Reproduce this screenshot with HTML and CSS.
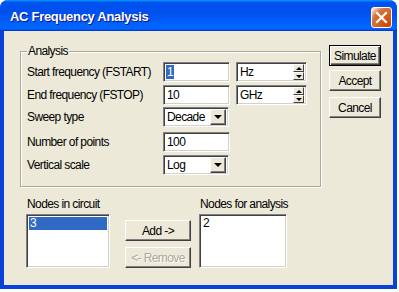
FILE: index.html
```html
<!DOCTYPE html>
<html lang="en">
<head>
    <meta charset="UTF-8">
    <title>AC Frequency Analysis</title>
    <link rel="stylesheet" href="styles.css">
</head>
<body>
    <div class="window">
        <div class="titlebar">
            <span class="title">AC Frequency Analysis</span>
            <div class="close-btn">
                <svg width="13" height="13" viewBox="0 0 13 13">
                    <path d="M2 2 L11 11 M11 2 L2 11" stroke="#fff" stroke-width="2.2" stroke-linecap="square"/>
                </svg>
            </div>
        </div>

        <div class="client">
            <div class="top-row">
                <fieldset class="group">
                    <legend>Analysis</legend>
                    <div class="form-grid">
                        <div class="label">Start frequency (FSTART)</div>
                        <div class="field"><span class="selected-text">1</span></div>
                        <div class="field spin">
                            <span>Hz</span>
                            <div class="spin-arrows">
                                <div class="spin-btn"><span class="tri-up"></span></div>
                                <div class="spin-btn"><span class="tri-down"></span></div>
                            </div>
                        </div>

                        <div class="label">End frequency (FSTOP)</div>
                        <div class="field">10</div>
                        <div class="field spin">
                            <span>GHz</span>
                            <div class="spin-arrows">
                                <div class="spin-btn"><span class="tri-up"></span></div>
                                <div class="spin-btn"><span class="tri-down"></span></div>
                            </div>
                        </div>

                        <div class="label">Sweep type</div>
                        <div class="field combo">
                            <span>Decade</span>
                            <div class="drop-btn"><span class="tri-down big"></span></div>
                        </div>
                        <div></div>

                        <div class="label">Number of points</div>
                        <div class="field">100</div>
                        <div></div>

                        <div class="label">Vertical scale</div>
                        <div class="field combo">
                            <span>Log</span>
                            <div class="drop-btn"><span class="tri-down big"></span></div>
                        </div>
                        <div></div>
                    </div>
                </fieldset>

                <div class="actions">
                    <div class="btn default">Simulate</div>
                    <div class="btn accept">Accept</div>
                    <div class="btn cancel">Cancel</div>
                </div>
            </div>

            <div class="bottom-row">
                <div class="list-col left-list">
                    <div class="list-label">Nodes in circuit</div>
                    <div class="listbox">
                        <div class="item active">3</div>
                    </div>
                </div>
                <div class="mid-buttons">
                    <div class="btn wide">Add -&gt;</div>
                    <div class="btn wide disabled">&lt;- Remove</div>
                </div>
                <div class="list-col right-list">
                    <div class="list-label">Nodes for analysis</div>
                    <div class="listbox">
                        <div class="item">2</div>
                    </div>
                </div>
            </div>
        </div>
    </div>
</body>
</html>
```

FILE: styles.css
```css
/* Page */
body {
    margin: 0;
    background: #fff;
    font-family: "Liberation Sans", Arial, sans-serif;
    font-size: 12px;
    letter-spacing: -0.6px;
    color: #000;
}

/* Window frame */
.window {
    width: 397px;
    height: 289px;
    box-sizing: border-box;
    border: 4px solid #0842d6;
    border-top: none;
    border-radius: 8px 8px 0 0;
    background: #ece9d8;
    display: flex;
    flex-direction: column;
}

.titlebar {
    height: 31px;
    margin: 0 -4px;
    border-radius: 8px 8px 0 0;
    background: linear-gradient(180deg, #0997ff, #0053ee 8%, #0050ee 40%, #06f 88%, #06f 93%, #005bff 95%, #003dd7 96%, #003dd7);
    display: flex;
    align-items: center;
    justify-content: space-between;
    padding: 0 5px 0 10px;
    flex-shrink: 0;
}

.title {
    color: #fff;
    font-weight: bold;
    font-size: 13px;
    letter-spacing: -0.3px;
    text-shadow: 1px 1px 0 #0f1089;
    margin-top: 1px;
}

.close-btn {
    width: 21px;
    height: 21px;
    box-sizing: border-box;
    border: 1px solid #fff;
    border-radius: 3px;
    background: radial-gradient(circle at 90% 90%, #cc4600 0%, #dc6527 55%, #cd7546 70%, #ffccb2 90%, #fff 100%);
    display: flex;
    align-items: center;
    justify-content: center;
    margin-top: 3px;
}

/* Client area */
.client {
    flex: 1;
    display: flex;
    flex-direction: column;
}

.top-row {
    display: flex;
    align-items: flex-start;
    padding: 13px 0 0 16px;
}

/* Group box */
.group {
    margin: 0;
    width: 301px;
    box-sizing: border-box;
    padding: 4px 0 10px 6px;
    border: 1px solid #aca899;
    box-shadow: inset 1px 1px 0 #fff, 1px 1px 0 #fff;
    min-width: 0;
}

.group legend {
    padding: 0 1px;
    margin-left: 0;
    line-height: 14px;
}

.form-grid {
    display: grid;
    grid-template-columns: 130px 67px 71px;
    grid-template-rows: 23px 22px 25px 23px 21px;
    column-gap: 6px;
    align-items: start;
}

.label {
    line-height: 20px;
    white-space: nowrap;
}

/* Sunken fields */
.field {
    height: 20px;
    box-sizing: border-box;
    background: #fff;
    border: 1px solid;
    border-color: #808080 #fff #fff #808080;
    box-shadow: inset 1px 1px 0 #404040, inset -1px -1px 0 #d4d0c8;
    padding: 0 3px;
    line-height: 18px;
    display: flex;
    align-items: center;
}

.selected-text {
    background: #316ac5;
    color: #fff;
    line-height: 14px;
    padding: 0 1px;
    margin-left: -1px;
}

.spin,
.combo {
    justify-content: space-between;
    padding-right: 2px;
}

.combo {
    width: 66px;
}

.spin-arrows {
    display: flex;
    flex-direction: column;
    width: 11px;
}

.spin-btn {
    height: 8px;
    box-sizing: border-box;
    background: #ece9d8;
    border: 1px solid;
    border-color: #fff #404040 #404040 #fff;
    display: flex;
    align-items: center;
    justify-content: center;
}

.drop-btn {
    width: 16px;
    height: 16px;
    box-sizing: border-box;
    background: #ece9d8;
    border: 1px solid;
    border-color: #fff #404040 #404040 #fff;
    box-shadow: inset -1px -1px 0 #808080;
    display: flex;
    align-items: center;
    justify-content: center;
}

.tri-up,
.tri-down {
    width: 0;
    height: 0;
    border-left: 3px solid transparent;
    border-right: 3px solid transparent;
}

.tri-up {
    border-bottom: 3px solid #000;
}

.tri-down {
    border-top: 3px solid #000;
}

.tri-down.big {
    border-left-width: 4px;
    border-right-width: 4px;
    border-top-width: 4px;
}

/* Buttons */
.actions {
    display: flex;
    flex-direction: column;
    margin: 1px 0 0 8px;
}

.btn {
    width: 52px;
    height: 21px;
    box-sizing: border-box;
    background: #ece9d8;
    border: 1px solid;
    border-color: #fff #404040 #404040 #fff;
    box-shadow: inset -1px -1px 0 #808080;
    display: flex;
    align-items: center;
    justify-content: center;
}

.btn.default {
    border-color: #000;
    box-shadow: inset 1px 1px 0 #fff, inset -1px -1px 0 #404040, inset -2px -2px 0 #808080;
}

.btn.accept {
    margin-top: 4px;
}

.btn.cancel {
    margin-top: 6px;
}

.btn.wide {
    width: 66px;
}

.btn.disabled {
    color: #aca899;
    text-shadow: 1px 1px 0 #fff;
}

/* Node lists */
.bottom-row {
    display: flex;
    align-items: flex-start;
    padding: 10px 0 0 22px;
}

.list-label {
    line-height: 14px;
    padding-left: 1px;
    margin-bottom: 3px;
}

.listbox {
    height: 54px;
    box-sizing: border-box;
    background: #fff;
    border: 1px solid;
    border-color: #808080 #fff #fff #808080;
    box-shadow: inset 1px 1px 0 #404040, inset -1px -1px 0 #d4d0c8;
    padding: 2px;
}

.left-list .listbox {
    width: 84px;
}

.right-list .listbox {
    width: 88px;
}

.item {
    line-height: 13px;
    padding-left: 1px;
}

.item.active {
    background: #316ac5;
    color: #fff;
}

.mid-buttons {
    display: flex;
    flex-direction: column;
    gap: 6px;
    margin: 23px 8px 0 15px;
}
```
